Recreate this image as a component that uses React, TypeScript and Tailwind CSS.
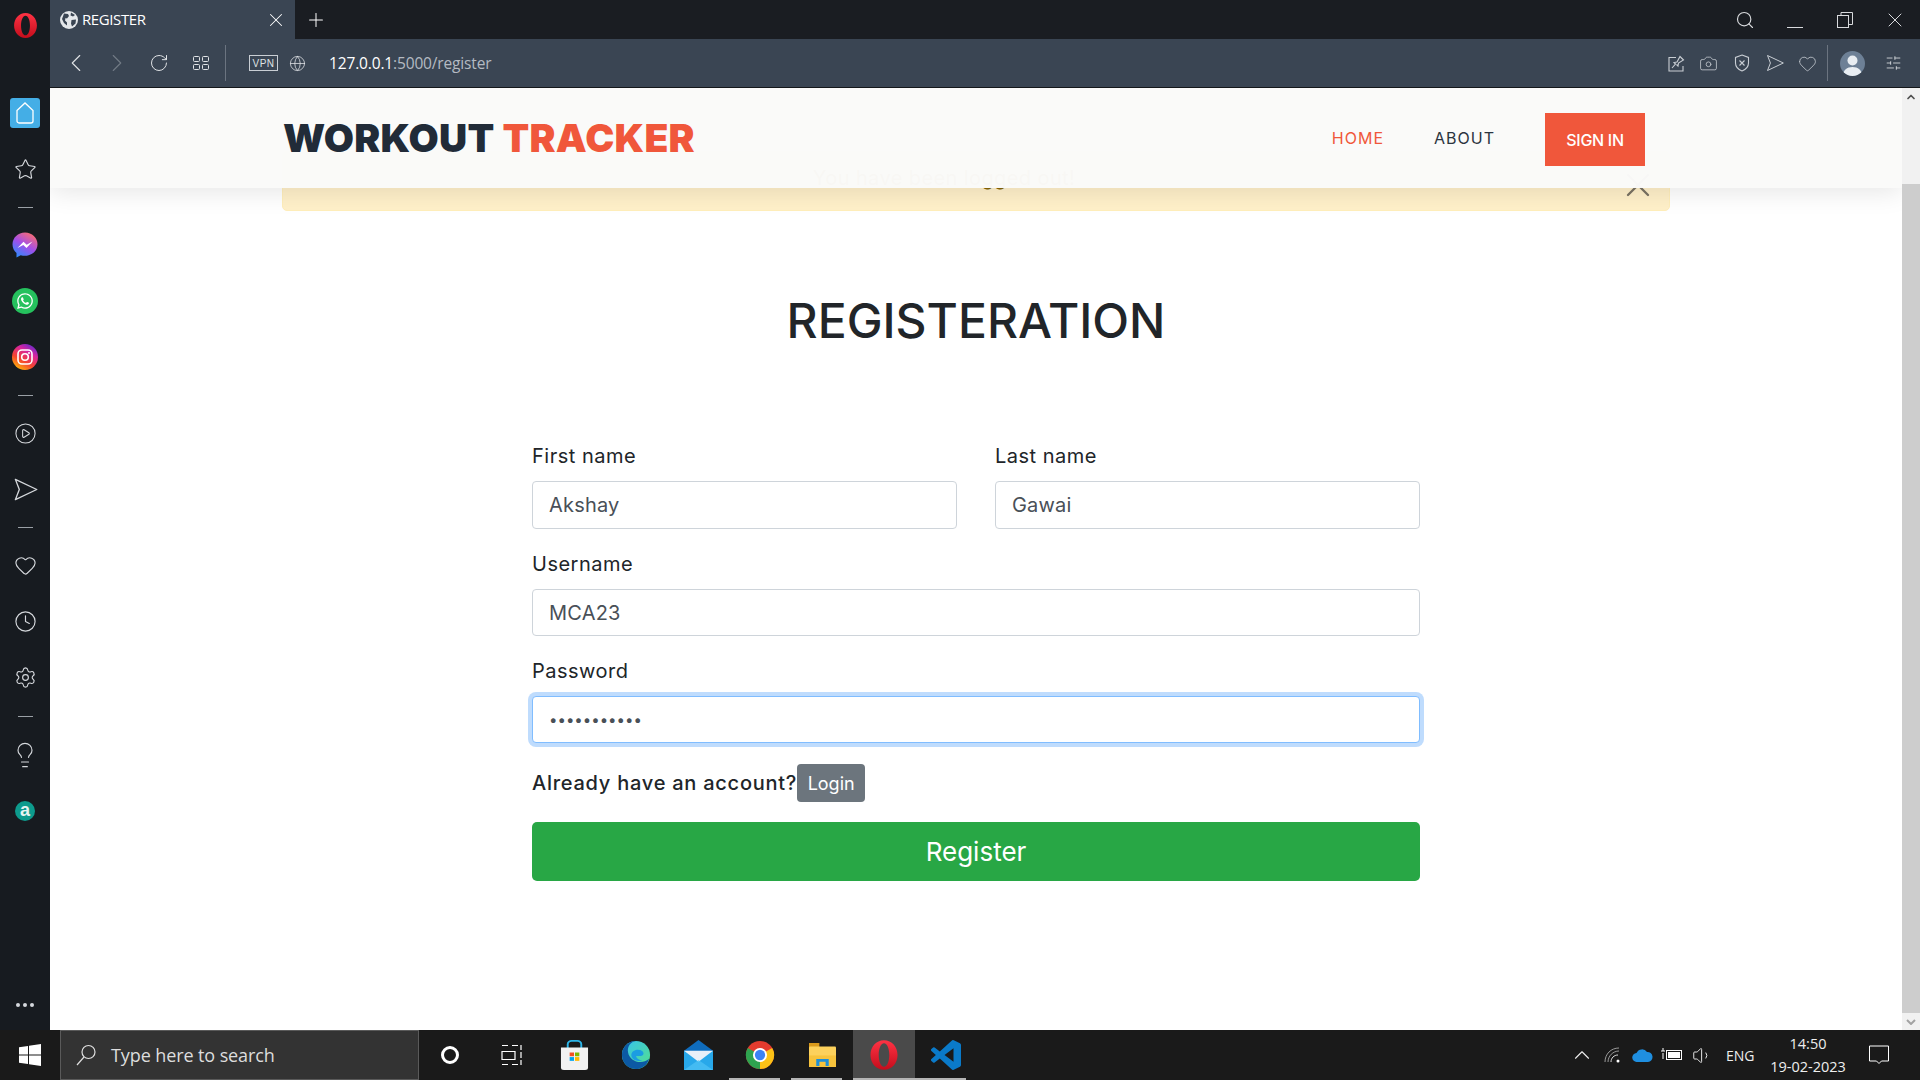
import React from 'react';
import {
  ChevronLeft, ChevronRight, RotateCw, Globe, Camera, Heart, Search, X, Plus, Star, CirclePlay, Clock, Settings,
  Lightbulb, SlidersHorizontal, ChevronUp, Volume1,
} from 'lucide-react';
import { FaWhatsapp } from 'react-icons/fa';

const OperaLogo = ({ size = 26 }: { size?: number }) => (
  <svg width={size} height={size} viewBox="0 0 26 26">
    <defs>
      <linearGradient id="op" x1="0" y1="0" x2="0" y2="1">
        <stop offset="0" stopColor="#ff3344" />
        <stop offset="1" stopColor="#c40d1c" />
      </linearGradient>
    </defs>
    <path fillRule="evenodd" fill="url(#op)" d="M13 1C6.600 1 2 6.400 2 13s4.600 12 11 12 11-5.400 11-12S19.400 1 13 1zm0 2.500c2.600 0 4.300 4.300 4.300 9.500s-1.700 9.500-4.300 9.500-4.300-4.300-4.300-9.500S10.400 3.500 13 3.500z" />
  </svg>
);

const SendOutline = ({ size = 22 }: { size?: number }) => (
  <svg width={size} height={size} viewBox="0 0 24 24" fill="none" stroke="currentColor" strokeWidth="1.200" strokeLinejoin="round">
    <path d="M3 3l19 9-19 9 3.500-9L3 3z" />
  </svg>
);

const SidebarDash = ({ tall = false }: { tall?: boolean }) => (
  <div className={tall ? "flex h-[22px] items-center justify-center" : "flex h-[20px] items-center justify-center"}>
    <div className="h-px w-[15px] bg-[#9aa0a6]" />
  </div>
);

const SidebarItem = ({ children }: { children: React.ReactNode }) => (
  <div className="flex h-[56px] items-center justify-center text-[#d5d8dc]">{children}</div>
);

const Sidebar = () => (
  <aside className="flex w-[50px] shrink-0 flex-col bg-[#171b20]">
    <div className="flex h-[50px] items-center justify-center">
      <OperaLogo size={27} />
    </div>
    <div className="mt-[35px] flex flex-col">
      <SidebarItem>
        <div className="flex h-[30px] w-[30px] items-center justify-center rounded-[3px] bg-[#44aee6]">
          <svg width="20" height="24" viewBox="0 0 20 24" fill="none" stroke="#fff" strokeWidth="1.300">
            <path d="M2 9.500L10 2l8 7.500V20a2 2 0 0 1-2 2H4a2 2 0 0 1-2-2V9.500z" />
          </svg>
        </div>
      </SidebarItem>
      <SidebarItem><Star size={23} strokeWidth={1.2} /></SidebarItem>
      <SidebarDash />
      <SidebarItem>
        <svg width="26" height="26" viewBox="0 0 26 26">
          <defs>
            <linearGradient id="ms" x1="0.200" y1="1" x2="0.800" y2="0">
              <stop offset="0" stopColor="#2a8cff" />
              <stop offset="0.500" stopColor="#a34ee8" />
              <stop offset="1" stopColor="#ff6f6a" />
            </linearGradient>
          </defs>
          <path fill="url(#ms)" d="M13 .5C6 .5.500 5.600.500 12.300c0 3.600 1.500 6.600 4 8.700v4.500l4.200-2.300c1.400.4 2.800.6 4.300.6 7 0 12.500-5.100 12.500-11.500S20 .5 13 .5z" />
          <path fill="#fff" d="M5.500 16l6-6.200 3.200 3 5.800-3.200-6 6.400-3.200-3z" />
        </svg>
      </SidebarItem>
      <SidebarItem>
        <div className="flex h-[26px] w-[26px] items-center justify-center rounded-full bg-[#25c15d] text-white">
          <FaWhatsapp size={18} />
        </div>
      </SidebarItem>
      <SidebarItem>
        <svg width="26" height="26" viewBox="0 0 26 26">
          <defs>
            <linearGradient id="ig" x1="0.200" y1="1" x2="0.800" y2="0">
              <stop offset="0" stopColor="#ffc107" />
              <stop offset="0.350" stopColor="#f5452d" />
              <stop offset="0.700" stopColor="#d6249f" />
              <stop offset="1" stopColor="#5b2bd1" />
            </linearGradient>
          </defs>
          <circle cx="13" cy="13" r="13" fill="url(#ig)" />
          <rect x="6" y="6" width="14" height="14" rx="4" fill="none" stroke="#fff" strokeWidth="1.600" />
          <circle cx="13" cy="13" r="3.300" fill="none" stroke="#fff" strokeWidth="1.600" />
          <circle cx="17" cy="9" r="1" fill="#fff" />
        </svg>
      </SidebarItem>
      <SidebarDash />
      <SidebarItem><CirclePlay size={23} strokeWidth={1.1} /></SidebarItem>
      <SidebarItem><SendOutline size={27} /></SidebarItem>
      <SidebarDash />
      <SidebarItem><Heart size={23} strokeWidth={1.2} /></SidebarItem>
      <SidebarItem><Clock size={23} strokeWidth={1.2} /></SidebarItem>
      <SidebarItem><Settings size={23} strokeWidth={1.2} /></SidebarItem>
      <SidebarDash tall />
      <SidebarItem><Lightbulb size={28} strokeWidth={1} /></SidebarItem>
      <SidebarItem>
        <div className="flex h-[20px] w-[20px] items-center justify-center rounded-full bg-[#0d9b8d] font-['Liberation_Sans',sans-serif] text-[18px] font-bold leading-none text-[#e6f4f2]">
          <span className="-mt-[2px]">a</span>
        </div>
      </SidebarItem>
    </div>
    <div className="mt-auto flex justify-center gap-[3px] pb-[23px]">
      <div className="h-[4px] w-[4px] rounded-full bg-[#d5d8dc]" />
      <div className="h-[4px] w-[4px] rounded-full bg-[#d5d8dc]" />
      <div className="h-[4px] w-[4px] rounded-full bg-[#d5d8dc]" />
    </div>
  </aside>
);

const TabStrip = () => (
  <div className="flex h-[39px] items-stretch bg-[#1a1d22] text-white">
    <div className="flex w-[245px] items-center bg-[#3a4553] pl-[10px] pr-[8px] font-['Open_Sans',sans-serif] text-[15px]">
      <svg width="18" height="18" viewBox="0 0 18 18" className="mr-[4px]">
        <circle cx="9" cy="9" r="9" fill="#e5e8eb" />
        <path fill="#3a4553" d="M4 2.500l4 .5 1 2-2 2.500-1.500-.5-.5 2.500 2 2v3L4 12 2 8zM11 1.500l4 2.500-2 1.500-2.500-1zM11.500 9l4.500-.5-.5 4-3.500 3-1-3z" />
      </svg>
      <span className="tracking-[-0.4px]">REGISTER</span>
      <X size={22} strokeWidth={1.1} className="ml-auto" />
    </div>
    <div className="flex w-[41px] items-center justify-center">
      <Plus size={22} strokeWidth={1.1} />
    </div>
    <div className="ml-auto flex items-center text-[#d8dadd]">
      <div className="flex w-[50px] justify-center"><Search size={20} strokeWidth={1.4} /></div>
      <div className="flex w-[50px] justify-center pt-[16px]"><div className="h-px w-[16px] bg-[#d8dadd]" /></div>
      <div className="flex w-[50px] justify-center">
        <svg width="16" height="16" viewBox="0 0 16 16" fill="none" stroke="currentColor" strokeWidth="1">
          <rect x="0.500" y="3.500" width="11" height="12" />
          <path d="M4 3.500V.5h11.500v12h-4" />
        </svg>
      </div>
      <div className="flex w-[50px] justify-center"><X size={24} strokeWidth={1} /></div>
    </div>
  </div>
);

const AddressBar = () => (
  <div className="flex h-[49px] items-center border-b border-[#14171a] bg-[#3a4553] text-[#dfe2e5]">
    <div className="flex w-[46px] justify-center pl-[6px]"><ChevronLeft size={30} strokeWidth={0.9} /></div>
    <div className="flex w-[42px] justify-center text-[#717a85]"><ChevronRight size={30} strokeWidth={0.9} /></div>
    <div className="flex w-[42px] justify-center"><RotateCw size={20} strokeWidth={1.2} /></div>
    <div className="flex w-[42px] justify-center">
      <svg width="16" height="14" viewBox="0 0 16 14" fill="none" stroke="currentColor" strokeWidth="1">
        <rect x="0.500" y="0.500" width="6" height="5" rx="1" />
        <rect x="9.500" y="0.500" width="6" height="5" rx="1" />
        <rect x="0.500" y="8.500" width="6" height="5" rx="1" />
        <rect x="9.500" y="8.500" width="6" height="5" rx="1" />
      </svg>
    </div>
    <div className="ml-[3px] h-[36px] w-px bg-[#6b7480]" />
    <div className="ml-[23px] flex h-[16px] w-[29px] items-center justify-center border border-[#c9ced4] font-['Liberation_Sans',sans-serif] text-[10px] tracking-[0.4px]">VPN</div>
    <Globe size={17} strokeWidth={1.1} className="ml-[11px]" />
    <div className="ml-[23px] pt-[1px] font-['Open_Sans',sans-serif] text-[15.500px] tracking-[-0.15px] text-white">
      127.0.0.1<span className="text-[#b4bac2]">:5000/register</span>
    </div>
    <div className="ml-auto flex items-center text-[#c9ced4]">
      <div className="flex w-[32px] justify-center">
        <svg width="17" height="17" viewBox="0 0 17 17" fill="none" stroke="currentColor" strokeWidth="1.100">
          <path d="M8 2.500H1v13.500h14V11" />
          <path d="M4 13l3.500-4 -1.500-1.500 3-.5L12 1.500l3.500 3.500-5 3-.5 3L8.500 9.500" />
        </svg>
      </div>
      <div className="flex w-[33px] justify-center"><Camera size={19} strokeWidth={1} /></div>
      <div className="flex w-[33px] justify-center">
        <svg width="16" height="18" viewBox="0 0 16 18" fill="none" stroke="currentColor" strokeWidth="1.100">
          <path d="M8 1l6.500 2.500V9c0 3.800-2.800 6.500-6.500 8-3.700-1.500-6.500-4.200-6.500-8V3.500L8 1z" />
          <path d="M5.500 6.500l5 5M10.500 6.500l-5 5" />
        </svg>
      </div>
      <div className="flex w-[33px] justify-center"><SendOutline size={20} /></div>
      <div className="flex w-[32px] justify-center"><Heart size={19} strokeWidth={1} /></div>
      <div className="ml-[4px] h-[36px] w-px bg-[#6b7480]" />
      <div className="ml-[12px] flex h-[25px] w-[25px] items-end justify-center overflow-hidden rounded-full bg-[#6d8096]">
        <svg width="25" height="25" viewBox="0 0 25 25" fill="#e8edf2">
          <circle cx="12.500" cy="9.500" r="5" />
          <path d="M3 25c0-6 4-9 9.500-9s9.500 3 9.500 9z" />
        </svg>
      </div>
      <div className="ml-[20px] mr-[18px] flex w-[17px] justify-center text-[#e8eaed]"><SlidersHorizontal size={18} strokeWidth={1.1} /></div>
    </div>
  </div>
);

const Field = ({ label, value, tall = false }: { label: string; value: string; tall?: boolean }) => (
  <div>
    <label className="block h-[30px] text-[20px] leading-[30px] tracking-[0.5px] text-[#212529]">{label}</label>
    <input
      type="text"
      value={value}
      readOnly
      className={
        tall
          ? "mt-[10px] block h-[48px] w-full rounded-[4px] border border-[#ced4da] bg-white px-[16px] text-[20px] tracking-[0.2px] text-[#495057] outline-none"
          : "mt-[10px] block h-[47px] w-full rounded-[4px] border border-[#ced4da] bg-white px-[16px] text-[20px] tracking-[0.2px] text-[#495057] outline-none"
      }
    />
  </div>
);

const Page = () => (
  <div className="relative min-w-0 flex-1 overflow-hidden bg-white font-['Inter',sans-serif]">
    <nav className="relative z-10 flex h-[100px] items-center bg-[#fafaf9]/[0.98] pl-[233px] pr-[257px] shadow-[0_4px_24px_rgba(0,0,0,0.1)]">
      <div className="text-[39px] font-black tracking-[0.25px] text-[#212b38]">
        WORKOUT <span className="text-[#f0573b]">TRACKER</span>
      </div>
      <div className="ml-auto flex items-center">
        <a className="mr-[50px] text-[16px] tracking-[1px] text-[#f0573b]">HOME</a>
        <a className="mr-[50px] text-[16px] tracking-[1px] text-[#2b3440]">ABOUT</a>
        <button className="mt-[3px] flex h-[53px] w-[100px] items-center justify-center bg-[#f0573b] text-[16px] font-medium tracking-[-0.3px] text-white">SIGN IN</button>
      </div>
    </nav>

    <div className="relative mx-[232px] -mt-[37px] flex h-[60px] items-center justify-center rounded-[5px] border border-[#ffeeba] bg-[#fff0c9] pb-[7px] pr-[64px] text-[20px] tracking-[0.4px] text-[#856404]">
      <span>You have been logged out!</span>
      <X size={40} strokeWidth={1.4} className="absolute right-[11px] top-[13px] text-[#7a7263]" />
    </div>

    <h1 className="mt-[76px] text-center text-[48px] font-medium leading-[68px] text-[#212529]">REGISTERATION</h1>

    <form className="mx-auto mt-[86px] w-[888px]">
      <div className="grid grid-cols-2 gap-[38px]">
        <Field label="First name" value="Akshay" tall />
        <Field label="Last name" value="Gawai" tall />
      </div>
      <div className="mt-[20px]">
        <Field label="Username" value="MCA23" />
      </div>
      <div className="mt-[20px]">
        <label className="block h-[30px] text-[20px] leading-[30px] tracking-[0.5px] text-[#212529]">Password</label>
        <input
          type="password"
          value="12345678901"
          readOnly
          className="mt-[10px] block h-[47px] w-full rounded-[4px] border border-[#80bdff] bg-white px-[16px] text-[15px] text-[#495057] outline-none ring-4 ring-[#bfdcfd]"
        />
      </div>
      <div className="mt-[21px] flex h-[38px] items-center text-[20px] font-medium tracking-[0.75px] text-[#212529]">
        <span>Already have an account?</span>
        <button type="button" className="flex h-[38px] w-[68px] items-center justify-center rounded-[4px] bg-[#6c757d] text-[18px] font-normal tracking-normal text-white">Login</button>
      </div>
      <button type="button" className="mt-[20px] h-[59px] w-full rounded-[5px] bg-[#28a745] text-[26px] font-normal text-white">Register</button>
    </form>
  </div>
);

const Scrollbar = () => (
  <div className="flex w-[18px] shrink-0 flex-col bg-[#f1f1f1]">
    <div className="flex h-[17px] items-center justify-center text-[#505050]">
      <ChevronUp size={12} strokeWidth={3.5} />
    </div>
    <div className="mt-[79px] flex-1 bg-[#cdcdcd]" />
    <div className="flex h-[17px] items-center justify-center text-[#a3a3a3]">
      <svg width="10" height="6" viewBox="0 0 10 6" fill="none" stroke="currentColor" strokeWidth="2"><path d="M1 1l4 4 4-4" /></svg>
    </div>
  </div>
);

const TaskCell = ({ children, active = false, running = false }: { children: React.ReactNode; active?: boolean; running?: boolean }) => (
  <div className={active ? "relative flex w-[62px] items-center justify-center bg-[#4a4a4a]" : "relative flex w-[62px] items-center justify-center"}>
    {children}
    {running && <div className={active ? "absolute inset-x-0 bottom-0 h-[2px] bg-[#b5b5b5]" : "absolute bottom-0 left-[0px] right-[11px] h-[2px] bg-[#b5b5b5]"} />}
  </div>
);

const Taskbar = () => (
  <footer className="flex h-[50px] shrink-0 items-stretch bg-[#1a1a1a] font-['Open_Sans',sans-serif] text-white">
    <div className="flex w-[60px] items-center justify-center">
      <svg width="22" height="22" viewBox="0 0 22 22" fill="#fff">
        <path d="M0 3.200L9 2v8.500H0zM10 1.800L22 0v10.500H10zM0 11.500h9V20L0 18.800zM10 11.500h12V22l-12-1.800z" />
      </svg>
    </div>
    <div className="flex w-[359px] items-center border border-[#5a5a5a] bg-[#333333] pl-[14px]">
      <svg width="22" height="24" viewBox="0 0 22 24" fill="none" stroke="#e0e0e0" strokeWidth="1.200">
        <circle cx="13.500" cy="9" r="6.500" />
        <path d="M9 14L2 22" />
      </svg>
      <span className="ml-[14px] text-[18px] tracking-[-0.1px] text-[#dddddd]">Type here to search</span>
    </div>
    <TaskCell>
      <div className="h-[18px] w-[18px] rounded-full border-[3px] border-white" />
    </TaskCell>
    <TaskCell>
      <svg width="22" height="22" viewBox="0 0 22 22" fill="none" stroke="#fff" strokeWidth="1.200">
        <path d="M1 1.500h6M11 1.500h6M1 7.500h13v8H1zM1 20.500h6M11 20.500h6M20 1v5M20 8v6M20 16v5" />
      </svg>
    </TaskCell>
    <TaskCell>
      <svg width="29" height="30" viewBox="0 0 30 36" preserveAspectRatio="none">
        <path d="M8 10V5a4 4 0 0 1 4-4h6a4 4 0 0 1 4 4v5" fill="none" stroke="#2cb5e8" strokeWidth="2" />
        <path d="M1 9h28v24a3 3 0 0 1-3 3H4a3 3 0 0 1-3-3z" fill="#f2f2f2" />
        <rect x="10" y="15" width="4.500" height="4.500" fill="#f25022" />
        <rect x="15.500" y="15" width="4.500" height="4.500" fill="#7fba00" />
        <rect x="10" y="20.500" width="4.500" height="4.500" fill="#00a4ef" />
        <rect x="15.500" y="20.500" width="4.500" height="4.500" fill="#ffb900" />
      </svg>
    </TaskCell>
    <TaskCell>
      <svg width="30" height="30" viewBox="0 0 32 32">
        <defs>
          <linearGradient id="edgeA" x1="0" y1="0" x2="1" y2="1">
            <stop offset="0" stopColor="#35c1f1" />
            <stop offset="1" stopColor="#54e08a" />
          </linearGradient>
        </defs>
        <circle cx="16" cy="16" r="15" fill="url(#edgeA)" />
        <path d="M1 16C1 7.700 7.700 1 16 1c-6 1-9.500 6-8.500 12 1 6.500 7 10.500 13 10.500 3.500 0 6.500-1 9.500-3.500C28 27 22.500 31 16 31 7.700 31 1 24.300 1 16z" fill="#0c59a4" />
        <path d="M11 16c0-3 3-5.500 7-5.500s6 2 6 4c0 1.500-1.500 2.500-3 2.500h-5c.5 2.500 3 4.500 7 4.500-6 2.500-12-1-12-5.500z" fill="#1b9de2" />
      </svg>
    </TaskCell>
    <TaskCell>
      <svg width="29" height="30" viewBox="0 0 30 36" preserveAspectRatio="none">
        <path d="M15 0L30 13v23H0V13z" fill="#0f6cbd" />
        <rect x="0" y="13" width="30" height="23" fill="#28a8ea" />
        <path d="M0 13h30L15 26z" fill="#e8f0f8" />
        <path d="M30 36H0l15-12z" fill="#50c3f5" opacity="0.700" />
      </svg>
    </TaskCell>
    <TaskCell running>
      <svg width="30" height="30" viewBox="0 0 32 32">
        <circle cx="16" cy="16" r="15" fill="#e33b2e" />
        <path d="M16 16L29 8.500A15 15 0 0 1 16 31z" fill="#fbc116" />
        <path d="M16 16L16 31A15 15 0 0 1 3 8.500z" fill="#2ea44f" />
        <circle cx="16" cy="16" r="7.500" fill="#fff" />
        <circle cx="16" cy="16" r="5.500" fill="#3b82f6" />
      </svg>
    </TaskCell>
    <TaskCell running>
      <svg width="27" height="24" viewBox="3 1 26 27" preserveAspectRatio="none">
        <rect x="3" y="1" width="10" height="6" fill="#d99a1c" />
        <rect x="3" y="5" width="26" height="23" rx="1" fill="#fcd15c" />
        <path d="M3 15h26v13H3z" fill="#f7c33c" />
        <path d="M10 27v-8h12v8h-3v-5h-6v5z" fill="#1f8fd6" />
      </svg>
    </TaskCell>
    <TaskCell active running>
      <OperaLogo size={32} />
    </TaskCell>
    <TaskCell running>
      <svg width="30" height="30" viewBox="0 0 24 24" fill="#0a7ac9">
        <path d="M23.150 2.587L18.210.21a1.494 1.494 0 0 0-1.705.29l-9.460 8.630-4.120-3.128a.999.999 0 0 0-1.276.057L.327 7.261A1 1 0 0 0 .326 8.740L3.899 12 .326 15.260a1 1 0 0 0 .001 1.479L1.650 17.940a.999.999 0 0 0 1.276.057l4.120-3.128 9.460 8.630a1.492 1.492 0 0 0 1.704.29l4.942-2.377A1.500 1.500 0 0 0 24 20.060V3.939a1.500 1.500 0 0 0-.85-1.352zm-5.146 14.861L10.826 12l7.178-5.448v10.896z" />
      </svg>
    </TaskCell>
    <div className="ml-auto flex items-center text-[#eeeeee]">
      <div className="flex w-[30px] justify-center"><ChevronUp size={26} strokeWidth={1} /></div>
      <div className="flex w-[30px] justify-center">
        <svg width="16" height="16" viewBox="0 0 16 16" fill="none" stroke="#9a9a9a" strokeWidth="1">
          <path d="M1 15C1 7 7 1 15 1M4 15c0-6 5-11 11-11" />
          <path d="M7 15c0-4 3-7 7-7" stroke="#ddd" />
          <circle cx="14" cy="14" r="1.500" fill="#fff" stroke="none" />
        </svg>
      </div>
      <div className="flex w-[30px] justify-center">
        <svg width="21" height="14" viewBox="0 0 21 14">
          <path d="M5 14a4.500 4.500 0 0 1-.5-9A6 6 0 0 1 15 4a5 5 0 0 1 1 10z" fill="#1f8fe0" />
        </svg>
      </div>
      <div className="flex w-[30px] justify-center">
        <svg width="22" height="14" viewBox="0 0 22 14" fill="none" stroke="#fff" strokeWidth="1">
          <rect x="5.500" y="2.500" width="15" height="9" />
          <rect x="7" y="4" width="12" height="6" fill="#fff" stroke="none" />
          <path d="M0 3h4M2 0v3M2 5v6" />
        </svg>
      </div>
      <div className="flex w-[30px] justify-center"><Volume1 size={21} strokeWidth={1.1} /></div>
      <div className="ml-[9px] w-[37px] text-[14px]">ENG</div>
      <div className="flex w-[90px] flex-col items-center text-[14.500px] leading-[23px]">
        <span>14:50</span>
        <span>19-02-2023</span>
      </div>
      <div className="flex w-[52px] justify-center">
        <svg width="20" height="20" viewBox="0 0 20 20" fill="none" stroke="#fff" strokeWidth="1">
          <path d="M.5 1h19v15h-7L10 18.500 7.500 16h-7z" />
        </svg>
      </div>
      <div className="w-[15px]" />
    </div>
  </footer>
);

export default function App() {
  return (
    <div className="flex h-screen w-screen flex-col overflow-hidden">
      <div className="flex min-h-0 flex-1">
        <Sidebar />
        <div className="flex min-w-0 flex-1 flex-col">
          <TabStrip />
          <AddressBar />
          <div className="flex min-h-0 flex-1">
            <Page />
            <Scrollbar />
          </div>
        </div>
      </div>
      <Taskbar />
    </div>
  );
}
